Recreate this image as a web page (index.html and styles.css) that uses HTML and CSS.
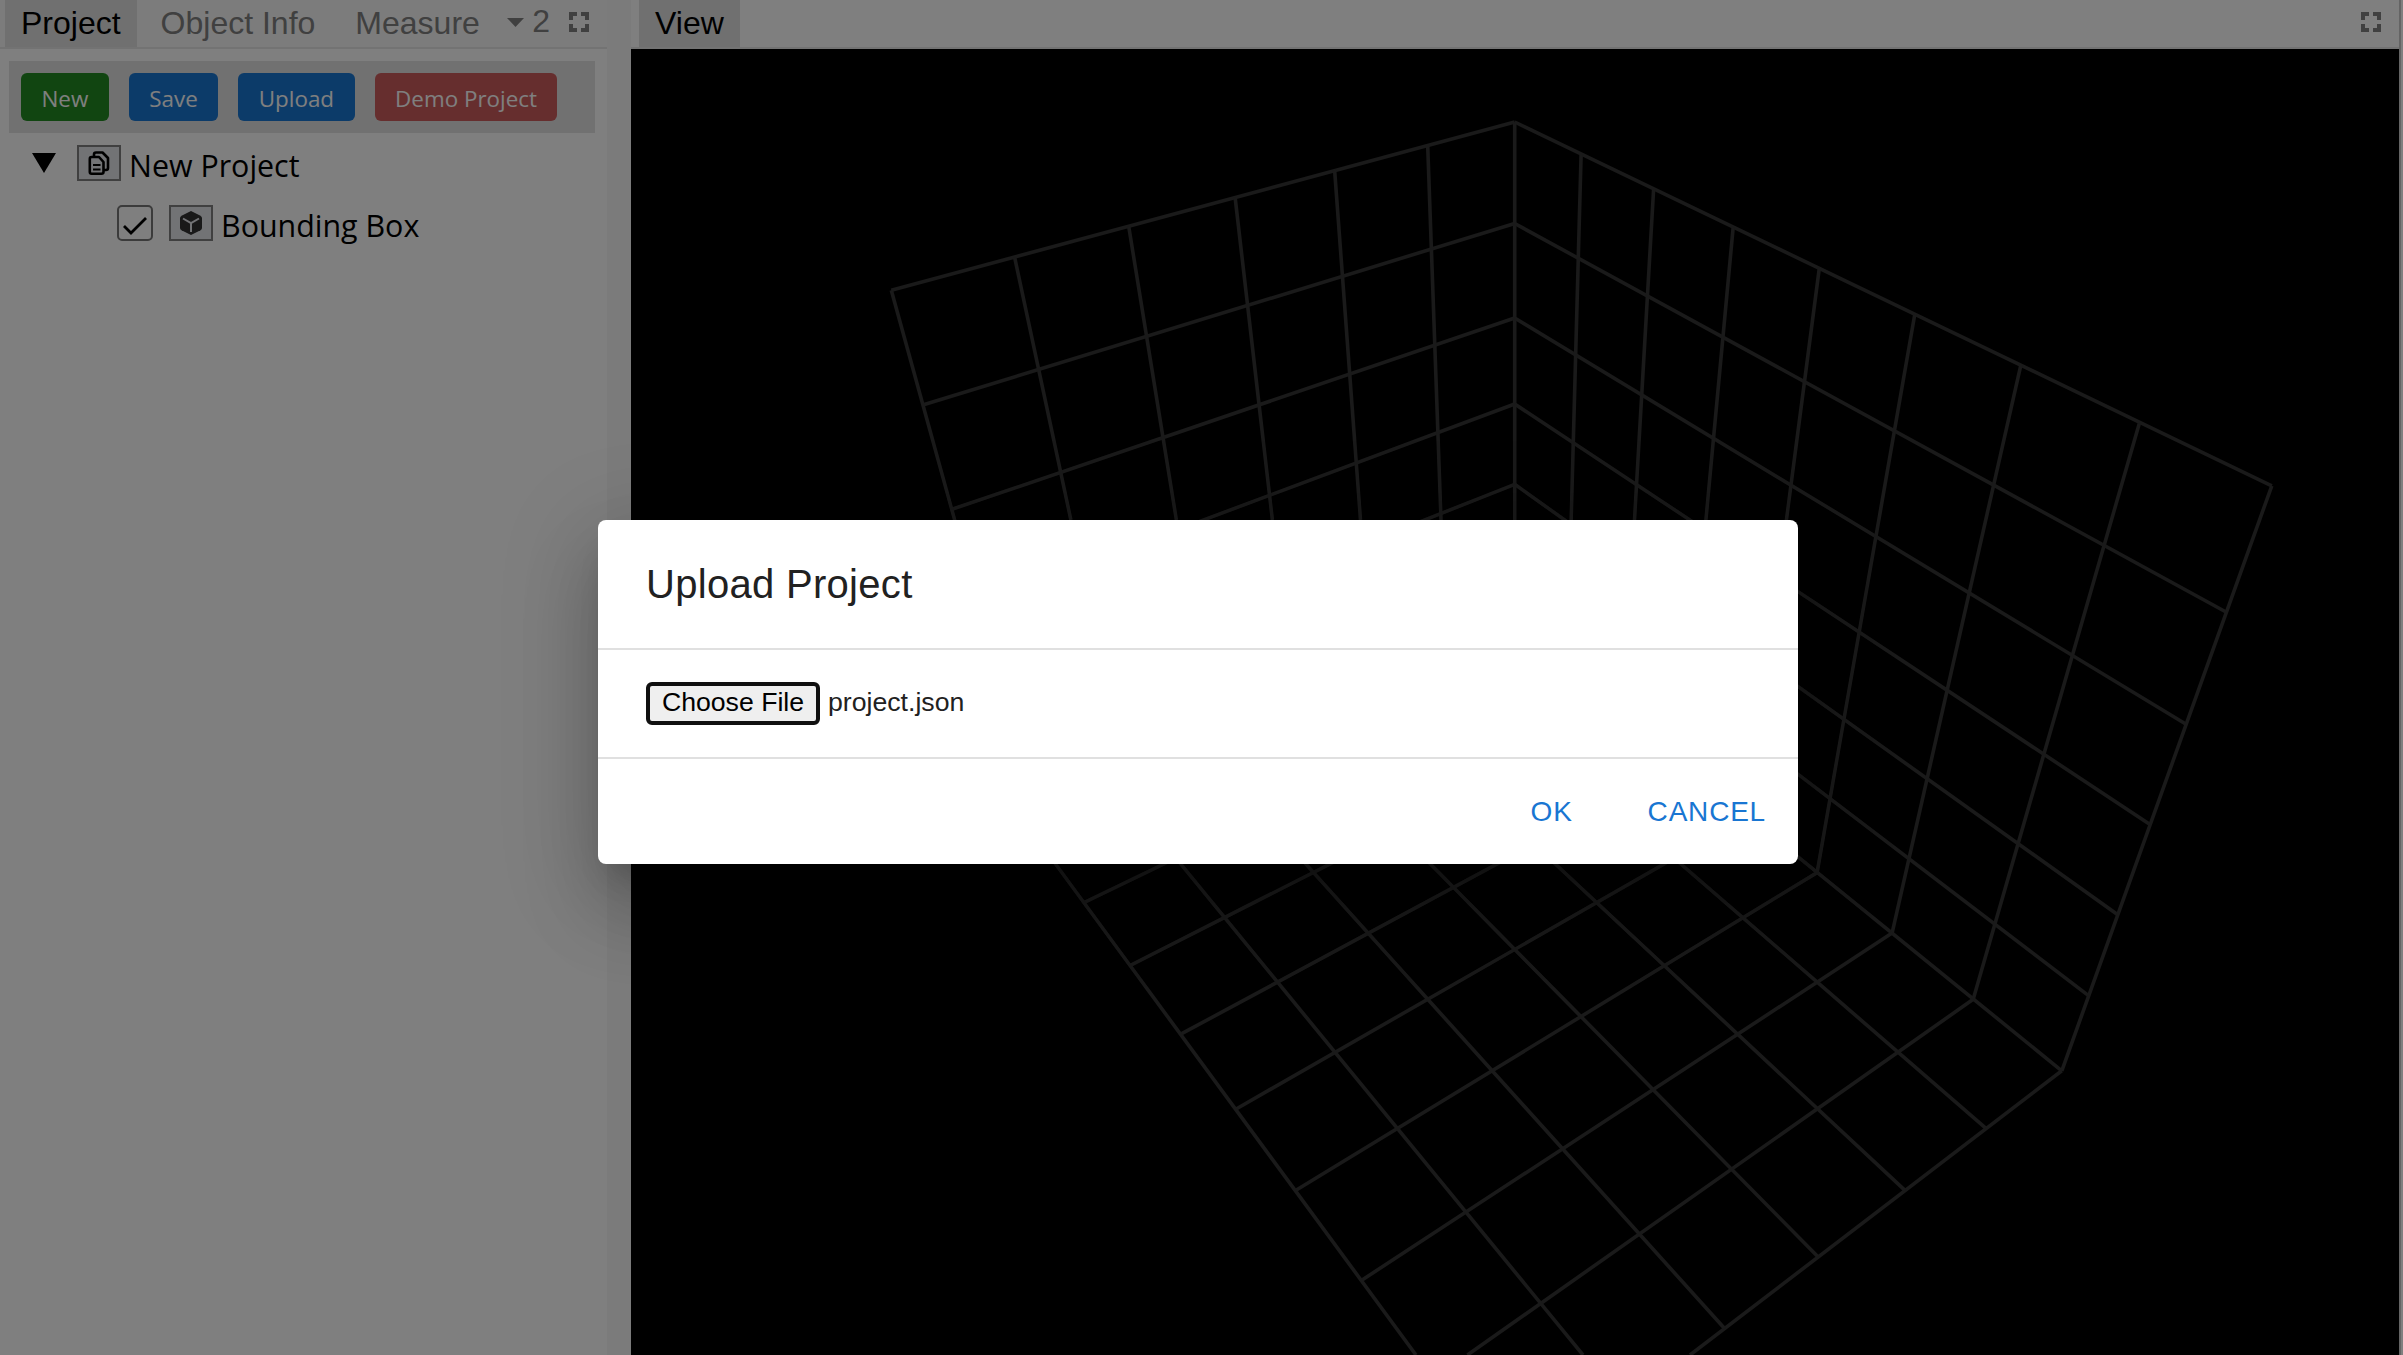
FILE: index.html
```html
<!DOCTYPE html>
<html lang="en">
<head>
<meta charset="utf-8">
<title>Upload Project</title>
<link rel="stylesheet" href="styles.css">
</head>
<body>
<div class="app">
  <section class="side">
    <header class="tabs">
      <span class="tab tab-on">Project</span>
      <span class="tab">Object Info</span>
      <span class="tab">Measure</span>
      <span class="more"><svg width="17" height="9" viewBox="0 0 17 9"><path d="M0 0h17L8.500 9z"/></svg>2</span>
      <svg class="expand" width="20" height="20" viewBox="0 0 20 20"><path d="M0 0h8v4H4v4H0zM12 0h8v8h-4V4h-4zM0 12h4v4h4v4H0zM16 12h4v8h-8v-4h4z"/></svg>
    </header>
    <div class="toolbar">
      <span class="btn green">New</span>
      <span class="btn blue">Save</span>
      <span class="btn blue">Upload</span>
      <span class="btn red">Demo Project</span>
    </div>
    <div class="row">
      <svg class="arrow" width="24" height="20" viewBox="0 0 24 20"><path d="M0 0h24L12 20z"/></svg>
      <span class="ico"><svg width="22" height="24" viewBox="0 0 22 24" fill="none" stroke="#000" stroke-width="2.600" stroke-linejoin="round"><path d="M3.500 6H11l4.500 5V21q0 1.700-2 1.700H3.500q-1.700 0-1.700-1.700V8Q1.800 6 3.500 6z"/><path d="M6 6V3.500Q6 1.500 8 1.500h6.500l5.500 5.500V17q0 2-2 2H16"/><path d="M5 14h7.500M5 18.500h7.500" stroke-width="2"/></svg></span>
      <span class="name">New Project</span>
    </div>
    <div class="row child">
      <span class="check"><svg width="24" height="18" viewBox="0 0 24 18" fill="none" stroke="#000" stroke-width="2.800"><path d="M1 9l7 7L23 1"/></svg></span>
      <span class="ico"><svg width="22" height="24" viewBox="0 0 22 24"><path fill="#333" d="M11 0l9 4.500Q22 5.500 22 7v10q0 1.500-1.500 2.300L11 24l-9.500-4.700Q0 18.500 0 17V7q0-1.500 2-2.500z"/><path d="M3 7.500l8 4.500 8-4.500M11 12v9" fill="none" stroke="#e5e6eb" stroke-width="2"/></svg></span>
      <span class="name">Bounding Box</span>
    </div>
  </section>
  <div class="splitter"></div>
  <section class="view">
    <header class="tabs">
      <span class="tab tab-on">View</span>
      <svg class="expand" width="20" height="20" viewBox="0 0 20 20"><path d="M0 0h8v4H4v4H0zM12 0h8v8h-4V4h-4zM0 12h4v4h4v4H0zM16 12h4v8h-8v-4h4z"/></svg>
    </header>
    <svg class="scene" viewBox="631 49 1768 1306" preserveAspectRatio="none">
      <!-- left wall -->
      <path d="M1514.700 122L891.300 290.300M1514.700 223.500L922.700 405M1514.700 318L952 509.300M1514.700 404L978 604M1514.700 484.300L1003 687"/>
      <path d="M1514.700 122V627M891.300 290.300L1046 851M1014.700 257.700L1070.900 520M1128.700 226.300L1176.400 520M1235.100 197.300L1272.400 520M1334.600 170L1360.500 520M1427.700 145.700L1441 520M1046 851L1514.700 627"/>
      <!-- right wall -->
      <path d="M1514.700 122L2271.800 485.800M1514.700 223.500L2226 612M1514.700 318L2185.700 724M1514.700 404L2150.400 824.800M1514.700 484.300L2117.100 914.300M1514.700 558.300L2088.200 995.400M1514.700 627L2061.800 1070.800"/>
      <path d="M1581.100 154.700L1567.100 669.500M1653.600 189.500L1623.200 715M1733.200 227L1683.200 763.700M1819.400 267.600L1747.700 816.100M1914.800 314.300L1817.100 872.600M2020.900 364.800L1892.100 933.100M2139.300 423.400L1973.200 999.300M2271.800 485.800L2061.800 1070.800"/>
      <!-- floor -->
      <path d="M1567.100 669.500L1084.400 902.300M1623.200 715L1130.400 965.300M1683.200 763.700L1181.700 1033.700M1747.700 816.100L1236.600 1108.700M1817.100 872.600L1296.400 1190M1892.100 933.100L1362.100 1280M1973.200 999.300L1467.400 1355M2061.800 1070.800L1690 1355"/>
      <path d="M1046 851L1416 1355M1136 809.400L1583 1355M1220.400 769.300L1724.600 1328.500M1299.300 731.100L1818.200 1257M1373.800 694.500L1905 1190.400M1445.200 659.900L1985.700 1128.100"/>
    </svg>
  </section>
  <div class="edge"></div>
</div>
<div class="backdrop">
  <div class="dialog">
    <h2 class="title">Upload Project</h2>
    <div class="content"><span class="choose">Choose File</span><span class="file">project.json</span></div>
    <div class="actions"><span>OK</span><span>CANCEL</span></div>
  </div>
</div>
</body>
</html>
```
FILE: styles.css
```css
* { box-sizing: border-box; }
body { margin: 0; overflow: hidden; font-family: "Liberation Sans", Arial, sans-serif; }
.app { display: flex; width: 2403px; height: 1355px; background: #fff; }
.side { width: 607px; flex: none; }
.splitter { width: 24px; background: #f7f7f7; flex: none; }
.view { flex: 1; display: flex; flex-direction: column; min-width: 0; }
.edge { width: 4px; background: #fff; border-left: 2px solid #c8c8c8; flex: none; }

.tabs { display: flex; height: 49px; flex: none; border-bottom: 2px solid #e6e6e6; padding-left: 5px; gap: 8px; font-size: 32px; line-height: 47px; color: #808080; }
.side .tabs { background: #f9f9f9; }
.view .tabs { padding-left: 8px; padding-right: 18px; justify-content: space-between; }
.tab { padding: 0 16px; white-space: nowrap; }
.tab-on { background: #e0e0e0; color: #000; }
.more { display: flex; line-height: 43px; gap: 8px; margin-left: 3.500px; }
.more svg { margin-top: 18px; }
.expand { margin: 12px 0 0 10.500px; flex: none; }
.tabs svg { fill: #808080; }

.toolbar { display: flex; gap: 20px; margin: 12px 12px 0 9px; height: 72px; padding: 12px; background: #e2e2e2; }
.btn { height: 48px; padding: 0 20.500px; border-radius: 6px; color: #fff; font: 22.400px/51px "Open Sans", sans-serif; white-space: nowrap; }
.green { background: #228b22; }
.blue { background: #1976d2; }
.red { background: #cd5c5c; }

.row { display: flex; height: 60px; padding: 12px 0 0 31.500px; font: 30.400px/41px "Open Sans", sans-serif; }
.arrow { margin: 8px 21.500px 0 0; }
.ico { display: flex; align-items: center; justify-content: center; width: 44px; height: 36px; margin-right: 8px; background: #e5e6eb; border: 2px solid #808080; }
.child { padding-left: 117px; }
.check { display: flex; align-items: center; justify-content: center; width: 36px; height: 36px; margin-right: 16px; padding-top: 6px; border: 2px solid #767676; border-radius: 5px; }
.name { white-space: nowrap; }

.scene { flex: 1; width: 100%; min-height: 0; background: #000; fill: none; stroke: #343434; stroke-width: 3.600; stroke-linejoin: round; }

.backdrop { position: absolute; inset: 0; background: rgba(0, 0, 0, .5); }
.dialog { width: 1200px; height: 344px; margin: 520px 0 0 598px; border-radius: 8px; background: #fff; color: #212121; box-shadow: 0 22px 30px -14px rgba(0,0,0,.2), 0 48px 76px 6px rgba(0,0,0,.14), 0 18px 92px 16px rgba(0,0,0,.12); }
.title { height: 128px; margin: 0; padding: 32px 48px; font-size: 40px; line-height: 64px; font-weight: 400; letter-spacing: .3px; }
.content { display: flex; align-items: center; height: 111px; padding: 0 48px; border: solid #e0e0e0; border-width: 2px 0; font-size: 26.670px; gap: 8px; }
.choose { width: 174px; height: 43px; border: 4px solid #101010; border-radius: 6px; background: #efefef; color: #000; line-height: 33px; text-align: center; }
.file { line-height: 41px; height: 43px; }
.actions { display: flex; justify-content: flex-end; align-items: center; height: 105px; padding-right: 32px; gap: 75px; font-size: 28px; letter-spacing: .8px; color: #1976d2; }
```
